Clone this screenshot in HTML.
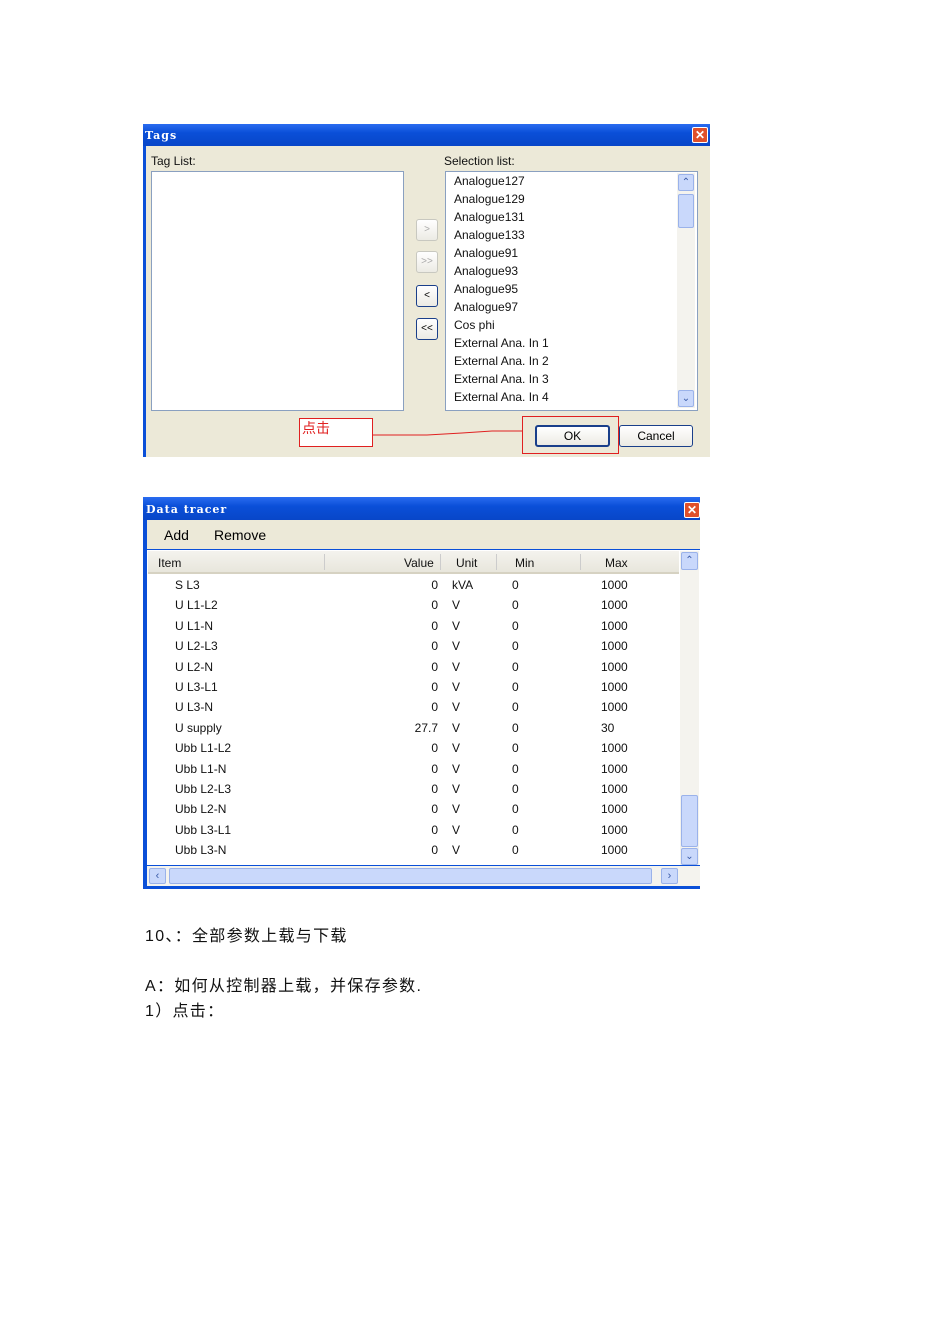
<!DOCTYPE html>
<html><head><meta charset="utf-8">
<style>
body{margin:0;width:950px;height:1344px;background:#fff;position:relative;font-family:"Liberation Sans","Noto Sans CJK SC",sans-serif;overflow:hidden}
.a{position:absolute}
.t{font-size:12px;color:#111;white-space:nowrap;line-height:14px}
.tb{background:linear-gradient(#2a6cf0,#0a4fd8 40%,#0846c8);}
.ttl{font-family:"DejaVu Serif","Liberation Serif",serif;font-weight:bold;color:#fff;font-size:11px;letter-spacing:1px}
.x{width:14px;height:14px;background:#e0502a;border:1px solid #fff;border-radius:2px;color:#fff;font-size:12px;line-height:14px;text-align:center;font-weight:bold}
.btn{border:1px solid #1a3f8a;border-radius:3px;background:linear-gradient(#fff,#ecebe4);font-size:12px;text-align:center;box-sizing:border-box}
.sb{background:#c9d8fb;border:1px solid #9ab2ea;border-radius:2px;box-sizing:border-box}
.cn{font-size:16px;color:#111;white-space:nowrap;letter-spacing:1.3px}
</style></head><body>

<!-- Tags window -->
<div class="a" style="left:143px;top:124px;width:567px;height:333px;background:#ece9d8"></div>
<div class="a" style="left:143px;top:124px;width:3px;height:333px;background:#0a4fd8"></div>
<div class="a tb" style="left:143px;top:124px;width:567px;height:22px"></div>
<div class="a ttl" style="left:145px;top:129px">Tags</div>
<div class="a x" style="left:692px;top:127px">✕</div>
<div class="a t" style="left:151px;top:154px">Tag List:</div>
<div class="a t" style="left:444px;top:154px">Selection list:</div>
<div class="a" style="left:151px;top:171px;width:251px;height:238px;background:#fff;border:1px solid #8aa0c0"></div>
<div class="a" style="left:445px;top:171px;width:251px;height:238px;background:#fff;border:1px solid #8aa0c0"></div>
<div class="a" style="left:677px;top:173px;width:18px;height:235px;background:#f4f3ee"></div>
<div class="a sb" style="left:678px;top:174px;width:16px;height:17px;font-size:10px;color:#3a5ba8;text-align:center;line-height:15px">⌃</div>
<div class="a sb" style="left:678px;top:194px;width:16px;height:34px"></div>
<div class="a sb" style="left:678px;top:390px;width:16px;height:17px;font-size:10px;color:#3a5ba8;text-align:center;line-height:15px">⌄</div>
<div class="a btn" style="left:416px;top:219px;width:22px;height:22px;border-color:#c8c8c0;color:#aaa;line-height:20px;font-size:10px">&gt;</div>
<div class="a btn" style="left:416px;top:251px;width:22px;height:22px;border-color:#c8c8c0;color:#aaa;line-height:20px;font-size:10px">&gt;&gt;</div>
<div class="a btn" style="left:416px;top:285px;width:22px;height:22px;line-height:20px;font-size:10px">&lt;</div>
<div class="a btn" style="left:416px;top:318px;width:22px;height:22px;line-height:20px;font-size:10px">&lt;&lt;</div>
<div class="a t" style="left:454px;top:172px;line-height:18px">Analogue127<br>Analogue129<br>Analogue131<br>Analogue133<br>Analogue91<br>Analogue93<br>Analogue95<br>Analogue97<br>Cos phi<br>External Ana. In 1<br>External Ana. In 2<br>External Ana. In 3<br>External Ana. In 4</div>
<div class="a" style="left:299px;top:418px;width:72px;height:27px;border:1px solid #e02020;background:#fff"></div>
<div class="a" style="left:302px;top:418px;color:#e02020;font-size:14px">点击</div>
<svg class="a" style="left:372px;top:425px" width="152" height="14"><polyline points="0,10 55,10 90,8 120,6 150,6" fill="none" stroke="#e02020" stroke-width="1"/></svg>
<div class="a" style="left:522px;top:416px;width:95px;height:36px;border:1px solid #e02020"></div>
<div class="a btn" style="left:535px;top:425px;width:75px;height:22px;line-height:18px;border-width:2px">OK</div>
<div class="a btn" style="left:619px;top:425px;width:74px;height:22px;line-height:20px">Cancel</div>

<!-- Data tracer -->
<div class="a" style="left:143px;top:497px;width:557px;height:392px;background:#0a4fd8"></div>
<div class="a tb" style="left:143px;top:497px;width:557px;height:23px"></div>
<div class="a ttl" style="left:146px;top:503px">Data tracer</div>
<div class="a x" style="left:684px;top:502px">✕</div>
<div class="a" style="left:147px;top:520px;width:553px;height:29px;background:#ece9d8"></div>
<div class="a" style="left:164px;top:527px;font-size:14px">Add</div>
<div class="a" style="left:214px;top:527px;font-size:14px">Remove</div>
<div class="a" style="left:147px;top:550px;width:553px;height:315px;background:#fff"></div>
<div class="a" style="left:148px;top:551px;width:531px;height:21px;background:linear-gradient(#f4f3ee,#e8e6dc);border-bottom:2px solid #d6d2c2"></div>
<div class="a" style="left:324px;top:554px;width:1px;height:16px;background:#ccc"></div>
<div class="a" style="left:440px;top:554px;width:1px;height:16px;background:#ccc"></div>
<div class="a" style="left:496px;top:554px;width:1px;height:16px;background:#ccc"></div>
<div class="a" style="left:580px;top:554px;width:1px;height:16px;background:#ccc"></div>
<div class="a t" style="left:158px;top:556px">Item</div>
<div class="a t" style="left:404px;top:556px">Value</div>
<div class="a t" style="left:456px;top:556px">Unit</div>
<div class="a t" style="left:515px;top:556px">Min</div>
<div class="a t" style="left:605px;top:556px">Max</div>
<div class="a t" style="left:175px;top:575px;line-height:20.4px">S L3<br>U L1-L2<br>U L1-N<br>U L2-L3<br>U L2-N<br>U L3-L1<br>U L3-N<br>U supply<br>Ubb L1-L2<br>Ubb L1-N<br>Ubb L2-L3<br>Ubb L2-N<br>Ubb L3-L1<br>Ubb L3-N</div>
<div class="a t" style="left:390px;width:48px;text-align:right;top:575px;line-height:20.4px">0<br>0<br>0<br>0<br>0<br>0<br>0<br>27.7<br>0<br>0<br>0<br>0<br>0<br>0</div>
<div class="a t" style="left:452px;top:575px;line-height:20.4px">kVA<br>V<br>V<br>V<br>V<br>V<br>V<br>V<br>V<br>V<br>V<br>V<br>V<br>V</div>
<div class="a t" style="left:512px;top:575px;line-height:20.4px">0<br>0<br>0<br>0<br>0<br>0<br>0<br>0<br>0<br>0<br>0<br>0<br>0<br>0</div>
<div class="a t" style="left:601px;top:575px;line-height:20.4px">1000<br>1000<br>1000<br>1000<br>1000<br>1000<br>1000<br>30<br>1000<br>1000<br>1000<br>1000<br>1000<br>1000</div>
<div class="a" style="left:680px;top:551px;width:19px;height:314px;background:#f4f3ee"></div>
<div class="a sb" style="left:681px;top:552px;width:17px;height:18px;font-size:10px;color:#3a5ba8;text-align:center;line-height:16px">⌃</div>
<div class="a sb" style="left:681px;top:795px;width:17px;height:52px"></div>
<div class="a sb" style="left:681px;top:848px;width:17px;height:17px;font-size:10px;color:#3a5ba8;text-align:center;line-height:15px">⌄</div>
<div class="a" style="left:147px;top:866px;width:553px;height:20px;background:#f4f3ee"></div>
<div class="a sb" style="left:149px;top:868px;width:17px;height:16px;font-size:11px;color:#3a5ba8;text-align:center;line-height:14px">‹</div>
<div class="a sb" style="left:169px;top:868px;width:483px;height:16px"></div>
<div class="a sb" style="left:661px;top:868px;width:17px;height:16px;font-size:11px;color:#3a5ba8;text-align:center;line-height:14px">›</div>

<div class="a cn" style="left:145px;top:922px">10、：全部参数上载与下载</div>
<div class="a cn" style="left:145px;top:972px">A：如何从控制器上载，并保存参数.</div>
<div class="a cn" style="left:145px;top:997px">1）点击：</div>
</body></html>
